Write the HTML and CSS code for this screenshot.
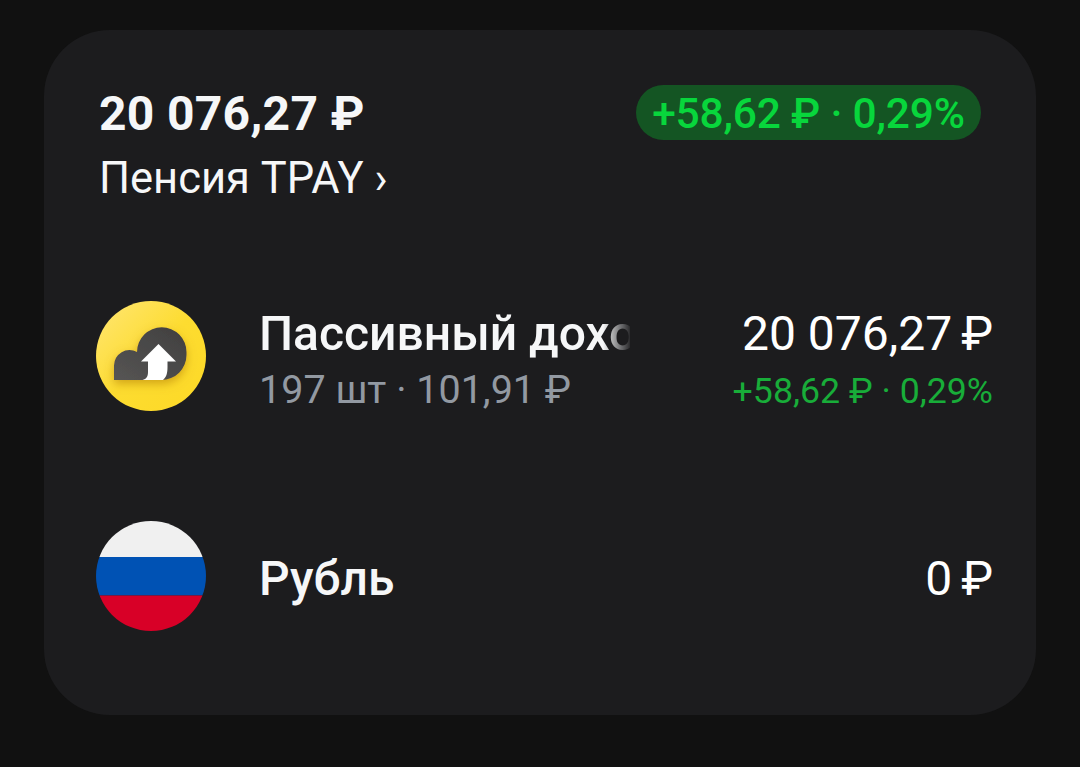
FILE: index.html
```html
<!DOCTYPE html>
<html lang="ru">
<head>
    <meta charset="UTF-8">
    <title>Пенсия TPAY</title>
    <link rel="stylesheet" href="styles.css">
</head>
<body>
    <div class="card">
        <header class="header">
            <div class="account">
                <div class="total">20 076,27 ₽</div>
                <div class="account-name">Пенсия TPAY ›</div>
            </div>
            <div class="badge">+58,62 ₽ · 0,29%</div>
        </header>

        <div class="row">
            <svg class="icon" viewBox="0 0 110 110">
                <defs>
                    <linearGradient id="gold" x1="0" y1="0" x2="1" y2="1">
                        <stop offset="0" stop-color="#ffe675"/>
                        <stop offset="0.5" stop-color="#fddc30"/>
                        <stop offset="1" stop-color="#fdd926"/>
                    </linearGradient>
                    <linearGradient id="cloud" x1="0" y1="1" x2="1" y2="0">
                        <stop offset="0" stop-color="#565554"/>
                        <stop offset="1" stop-color="#403f3f"/>
                    </linearGradient>
                    <filter id="shadow" x="-30%" y="-30%" width="160%" height="180%">
                        <feDropShadow dx="0" dy="4" stdDeviation="5" flood-color="#a86f00" flood-opacity="0.5"/>
                    </filter>
                </defs>
                <circle cx="55" cy="55" r="55" fill="url(#gold)"/>
                <path d="M18 79V64.500A15.500 15.500 0 0 1 41 51A24.500 24.500 0 0 1 90.500 51V54A25 25 0 0 1 65.500 79Z" fill="url(#cloud)" filter="url(#shadow)"/>
                <path d="M62.500 43L80 60.500H71.500V66C71.500 72 70.500 76 67 79H46.500C50.500 78 52 75.500 52 71V60.500H45Z" fill="#fff"/>
            </svg>
            <div class="info">
                <div class="name fade">Пассивный дохо</div>
                <div class="count">197 шт · 101,91 ₽</div>
            </div>
            <div class="values">
                <div class="price">20 076,27<span class="currency">₽</span></div>
                <div class="change">+58,62 ₽ · 0,29%</div>
            </div>
        </div>

        <div class="row">
            <svg class="icon" viewBox="0 0 110 110">
                <clipPath id="round"><circle cx="55" cy="55" r="55"/></clipPath>
                <g clip-path="url(#round)">
                    <rect width="110" height="36" fill="#f0f0f0"/>
                    <rect y="36" width="110" height="38.500" fill="#0052b4"/>
                    <rect y="74.500" width="110" height="35.500" fill="#d80027"/>
                </g>
            </svg>
            <div class="info single">
                <div class="name">Рубль</div>
            </div>
            <div class="values single">
                <div class="price">0<span class="currency">₽</span></div>
            </div>
        </div>
    </div>
</body>
</html>
```

FILE: styles.css
```css
* {
    box-sizing: border-box;
}
body {
    margin: 0;
    padding: 30px 44px 0;
    background-color: #111111;
    color: #f6f7f8;
    font-family: Roboto, sans-serif;
    white-space: nowrap;
}
.card {
    height: 685px;
    padding: 52px 43px 0 52px;
    background-color: #1c1c1e;
    border-radius: 66px;
}
.header {
    display: flex;
    justify-content: space-between;
    align-items: flex-start;
    height: 219px;
    padding: 0 12px 0 3px;
}
.total {
    font-size: 48px;
    font-weight: 700;
    letter-spacing: 0.3px;
    line-height: 64px;
}
.account-name {
    font-size: 43.5px;
    line-height: 66px;
}
.badge {
    width: 345px;
    height: 55px;
    margin-top: 3px;
    border-radius: 28px;
    background-color: #145523;
    color: #08d63c;
    font-size: 42.5px;
    font-weight: 500;
    letter-spacing: -0.2px;
    line-height: 58px;
    text-align: center;
}
.row {
    display: flex;
    align-items: flex-start;
    height: 220px;
}
.icon {
    flex: none;
    width: 110px;
    height: 110px;
    margin-right: 53px;
}
.info {
    width: 371px;
    padding-top: 5px;
}
.values {
    flex: 1;
    padding-top: 5px;
    text-align: right;
}
.single {
    padding-top: 30px;
}
.name {
    font-size: 48px;
    font-weight: 500;
    line-height: 56px;
}
.fade {
    -webkit-mask-image: linear-gradient(to right, #000 344px, transparent 373px);
    mask-image: linear-gradient(to right, #000 344px, transparent 373px);
}
.count {
    color: #9299a2;
    font-size: 39.5px;
    line-height: 56px;
}
.price {
    color: #fff;
    font-size: 48px;
    line-height: 56px;
}
.currency {
    margin-left: 9px;
}
.change {
    color: #18ad39;
    font-size: 35.7px;
    line-height: 58px;
}
```
